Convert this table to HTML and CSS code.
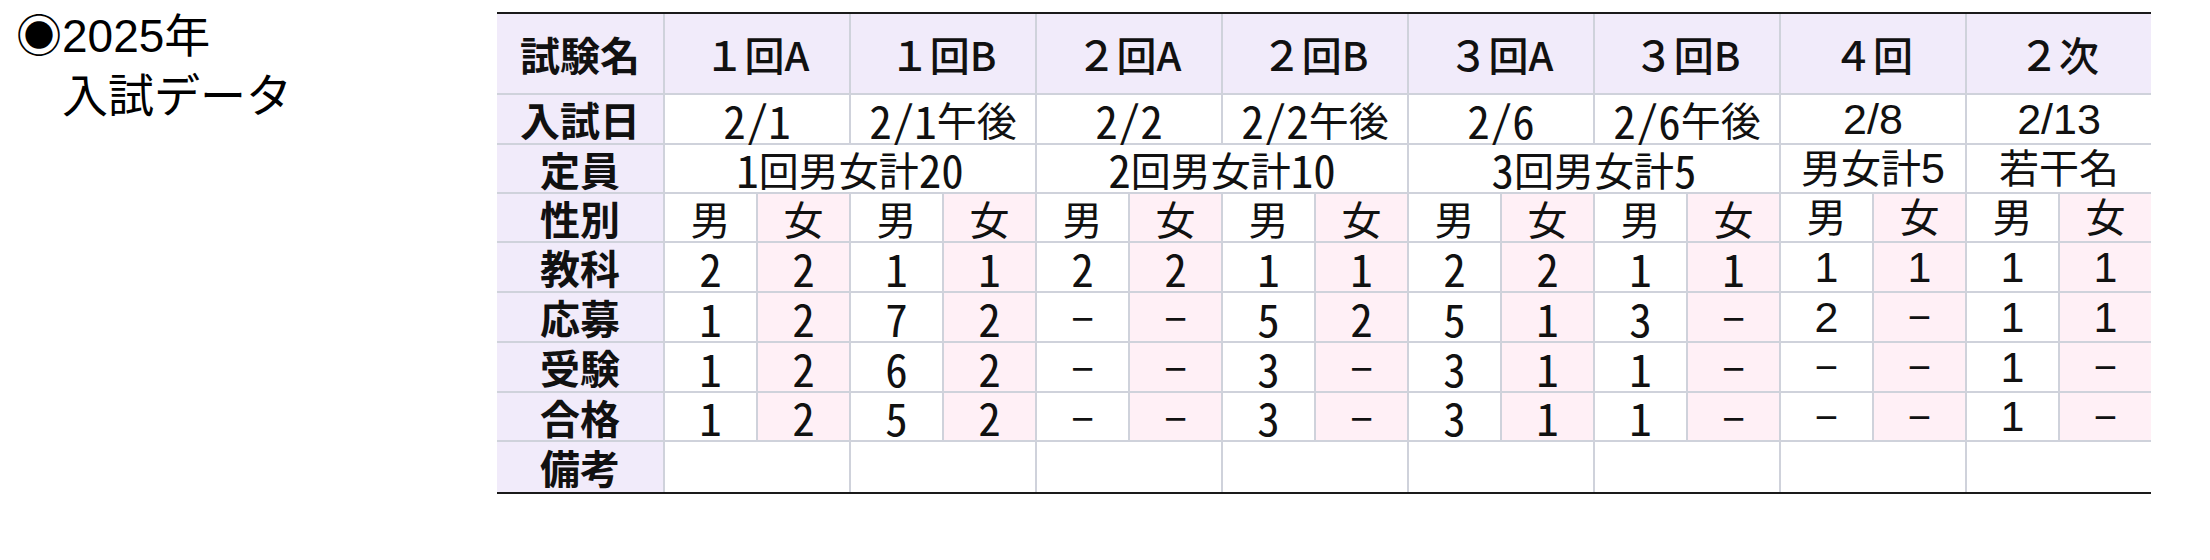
FILE: index.html
```html
<!DOCTYPE html>
<html lang="ja">
<head>
<meta charset="utf-8">
<title>2025年 入試データ</title>
<link rel="stylesheet" href="styles.css">
</head>
<body>
<div class="page">
  <div class="title">
    <div class="title-line">◉2025年</div>
    <div class="title-line">　入試データ</div>
  </div>
  <div class="sheet">
    <div class="c lab">試験名</div>
    <div class="c hd s2">１回A</div>
    <div class="c hd s2">１回B</div>
    <div class="c hd s2">２回A</div>
    <div class="c hd s2">２回B</div>
    <div class="c hd s2">３回A</div>
    <div class="c hd s2">３回B</div>
    <div class="c hd s2">４回</div>
    <div class="c hd s2">２次</div>

    <div class="c lab">入試日</div>
    <div class="c s2"><span class="n">2/1</span></div>
    <div class="c s2"><span class="n">2/1</span>午後</div>
    <div class="c s2"><span class="n">2/2</span></div>
    <div class="c s2"><span class="n">2/2</span>午後</div>
    <div class="c s2"><span class="n">2/6</span></div>
    <div class="c s2"><span class="n">2/6</span>午後</div>
    <div class="c s2 alt n">2/8</div>
    <div class="c s2 alt n">2/13</div>

    <div class="c lab">定員</div>
    <div class="c s4"><span class="n">1</span>回男女計<span class="n">20</span></div>
    <div class="c s4"><span class="n">2</span>回男女計<span class="n">10</span></div>
    <div class="c s4"><span class="n">3</span>回男女計<span class="n">5</span></div>
    <div class="c s2 alt">男女計<span class="n">5</span></div>
    <div class="c s2 alt">若干名</div>

    <div class="c lab">性別</div>
    <div class="c">男</div><div class="c f">女</div>
    <div class="c">男</div><div class="c f">女</div>
    <div class="c">男</div><div class="c f">女</div>
    <div class="c">男</div><div class="c f">女</div>
    <div class="c">男</div><div class="c f">女</div>
    <div class="c">男</div><div class="c f">女</div>
    <div class="c alt">男</div><div class="c f alt">女</div>
    <div class="c alt">男</div><div class="c f alt">女</div>

    <div class="c lab">教科</div>
    <div class="c n">2</div><div class="c f n">2</div>
    <div class="c n">1</div><div class="c f n">1</div>
    <div class="c n">2</div><div class="c f n">2</div>
    <div class="c n">1</div><div class="c f n">1</div>
    <div class="c n">2</div><div class="c f n">2</div>
    <div class="c n">1</div><div class="c f n">1</div>
    <div class="c alt n">1</div><div class="c f alt n">1</div>
    <div class="c alt n">1</div><div class="c f alt n">1</div>

    <div class="c lab">応募</div>
    <div class="c n">1</div><div class="c f n">2</div>
    <div class="c n">7</div><div class="c f n">2</div>
    <div class="c">−</div><div class="c f">−</div>
    <div class="c n">5</div><div class="c f n">2</div>
    <div class="c n">5</div><div class="c f n">1</div>
    <div class="c n">3</div><div class="c f">−</div>
    <div class="c alt n">2</div><div class="c f alt">−</div>
    <div class="c alt n">1</div><div class="c f alt n">1</div>

    <div class="c lab">受験</div>
    <div class="c n">1</div><div class="c f n">2</div>
    <div class="c n">6</div><div class="c f n">2</div>
    <div class="c">−</div><div class="c f">−</div>
    <div class="c n">3</div><div class="c f">−</div>
    <div class="c n">3</div><div class="c f n">1</div>
    <div class="c n">1</div><div class="c f">−</div>
    <div class="c alt">−</div><div class="c f alt">−</div>
    <div class="c alt n">1</div><div class="c f alt">−</div>

    <div class="c lab">合格</div>
    <div class="c n">1</div><div class="c f n">2</div>
    <div class="c n">5</div><div class="c f n">2</div>
    <div class="c">−</div><div class="c f">−</div>
    <div class="c n">3</div><div class="c f">−</div>
    <div class="c n">3</div><div class="c f n">1</div>
    <div class="c n">1</div><div class="c f">−</div>
    <div class="c alt">−</div><div class="c f alt">−</div>
    <div class="c alt n">1</div><div class="c f alt">−</div>

    <div class="c lab">備考</div>
    <div class="c s2"></div>
    <div class="c s2"></div>
    <div class="c s2"></div>
    <div class="c s2"></div>
    <div class="c s2"></div>
    <div class="c s2"></div>
    <div class="c s2"></div>
    <div class="c s2"></div>
  </div>
</div>
</body>
</html>
```
FILE: styles.css
```css
html, body {
  margin: 0;
  padding: 0;
  background: #ffffff;
}

.page {
  display: flex;
  align-items: flex-start;
  color: #111111;
}

.title {
  box-sizing: border-box;
  width: 497px;
  padding: 6px 0 0 16px;
  font-family: "Liberation Sans", "Noto Sans CJK JP", sans-serif;
  font-size: 46px;
  line-height: 60px;
  color: #000000;
}

.title-line {
  white-space: pre;
}

.sheet {
  margin-top: 12px;
  display: grid;
  grid-template-columns: 166px repeat(16, 91px);
  grid-template-rows: 79px 48px 47px 47px 48px 48px 48px 47px 50px;
  gap: 2px;
  background: #cfd2db;
  border-top: 2px solid #1a1a1a;
  border-bottom: 2px solid #1a1a1a;
  font-family: "Noto Sans CJK JP", sans-serif;
  font-feature-settings: "hwid";
  font-size: 40px;
  line-height: 1;
  color: #111111;
}

.c {
  display: flex;
  align-items: center;
  justify-content: center;
  background: #ffffff;
  white-space: nowrap;
}

.n {
  font-size: 45px;
  font-feature-settings: "hwid";
}

.lab {
  background: #f1ebfa;
  font-weight: 700;
}

.hd {
  background: #f1ebfa;
  font-weight: 500;
  font-feature-settings: normal;
}

.f {
  background: #fff0f6;
}

.alt {
  font-family: "Liberation Sans", "Noto Sans CJK JP", sans-serif;
  font-feature-settings: normal;
}

.alt.n,
.alt .n {
  font-size: 43px;
  font-feature-settings: normal;
}

.s2 {
  grid-column: span 2;
}

.s4 {
  grid-column: span 4;
}
```
